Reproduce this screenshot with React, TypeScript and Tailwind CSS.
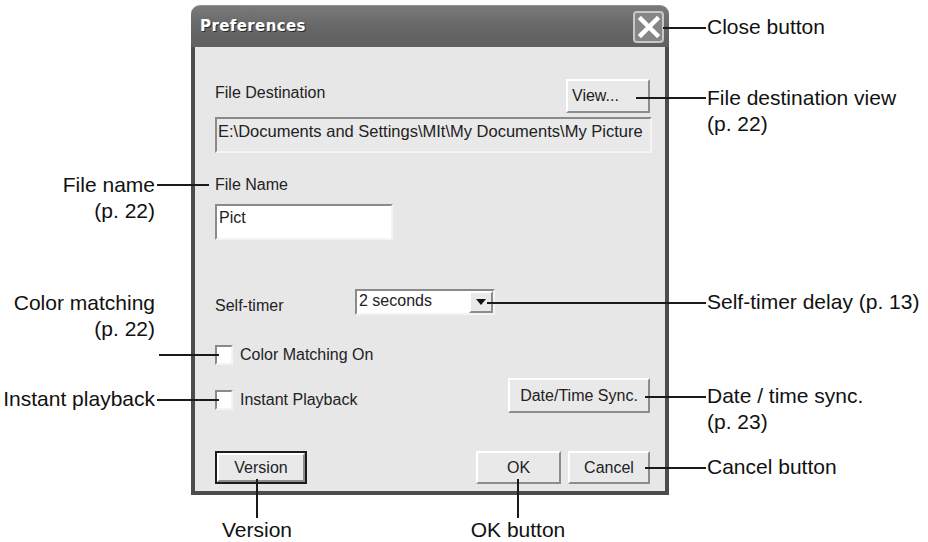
import React from "react";

const raised =
  "border-2 border-t-white border-l-white border-r-[#8c8c8c] border-b-[#8c8c8c] bg-[#e9e9e9]";
const sunken =
  "border-2 border-t-[#8a8a8a] border-l-[#8a8a8a] border-r-[#f4f4f4] border-b-[#f4f4f4]";

function HLine({ x1, x2, y }: { x1: number; x2: number; y: number }) {
  return (
    <div
      className="absolute h-[2px] bg-[#1a1a1a]"
      style={{ left: x1, top: y - 1, width: x2 - x1 }}
    />
  );
}
function VLine({ x, y1, y2 }: { x: number; y1: number; y2: number }) {
  return (
    <div
      className="absolute w-[2px] bg-[#1a1a1a]"
      style={{ left: x - 1, top: y1, height: y2 - y1 }}
    />
  );
}

function Checkbox() {
  return <div className={`w-[18px] h-[20px] bg-white ${sunken}`} />;
}

export default function App() {
  return (
    <div
      className="relative w-[928px] h-[542px] bg-white overflow-hidden"
      style={{ fontFamily: '"Liberation Sans", Arial, sans-serif' }}
    >
      {/* Dialog */}
      <div className="ml-[191px] pt-[5px] w-[478px] flex flex-col">
        {/* Title bar */}
        <div className="h-[42px] rounded-t-[9px] bg-gradient-to-b from-[#7a7a7a] via-[#676767] to-[#606060] border-t border-[#8f8f8f] flex items-center justify-between pl-[9px] pr-[5px]">
          <span
            className="text-white text-[15px] font-bold tracking-[0.4px] [text-shadow:1px_1px_0_#2a2a2a]"
            style={{ fontFamily: '"DejaVu Sans", sans-serif' }}
          >
            Preferences
          </span>
          <div className="w-[31px] h-[32px] rounded-[4px] border-2 border-[#c8c8c8] bg-[#868686] flex items-center justify-center">
            <svg width="22" height="22" viewBox="0 0 22 22">
              <path
                d="M3 3 L19 19 M19 3 L3 19"
                stroke="white"
                strokeWidth="4.5"
                strokeLinecap="square"
              />
            </svg>
          </div>
        </div>
        {/* Body */}
        <div className="bg-[#e7e7e7] border-x-4 border-b-4 border-[#4c4c4c] pl-[20px] pr-[15px] pb-[7px] text-[16px] text-[#222]">
          <div className="mt-[32px] flex justify-between items-start h-[34px]">
            <span className="mt-[4px] leading-[20px]">File Destination</span>
            <div className={`w-[84px] h-[34px] ${raised} flex items-center pl-[4px] leading-none`}>
              View...
            </div>
          </div>
          <div
            className={`mt-[4px] w-[437px] h-[36px] ${sunken} bg-[#e9e9e9] pl-[1px] pt-[2px] text-[16.5px] leading-[20px] whitespace-nowrap overflow-hidden`}
          >
            E:\Documents and Settings\MIt\My Documents\My Picture
          </div>
          <div className="mt-[22px] leading-[20px]">File Name</div>
          <div className={`mt-[9px] w-[178px] h-[36px] bg-white ${sunken} pl-[2px] pt-[2px] leading-[20px]`}>
            Pict
          </div>
          <div className="mt-[49px] flex items-center h-[26px]">
            <span className="w-[140px] pt-[8px] leading-[20px]">Self-timer</span>
            <div className={`w-[140px] h-[26px] bg-white ${sunken} flex items-stretch`}>
              <span className="flex-1 pl-[2px] leading-[20px]">2 seconds</span>
              <div className={`w-[24px] ${raised} flex items-center justify-center`}>
                <svg width="10" height="6" viewBox="0 0 10 6">
                  <path d="M0 0 H10 L5 6 Z" fill="#111" />
                </svg>
              </div>
            </div>
          </div>
          <div className="mt-[30px] flex items-center h-[20px]">
            <Checkbox />
            <span className="ml-[7px] leading-[20px]">Color Matching On</span>
          </div>
          <div className="mt-[13px] flex justify-between items-start h-[35px]">
            <div className="mt-[12px] flex items-center h-[20px]">
              <Checkbox />
              <span className="ml-[7px] leading-[20px]">Instant Playback</span>
            </div>
            <div className={`w-[142px] h-[35px] ${raised} flex items-center justify-center leading-none`}>
              Date/Time Sync.
            </div>
          </div>
          <div className="mt-[38px] flex justify-between items-start h-[33px]">
            <div className="w-[92px] h-[33px] border-2 border-[#1c1c1c]">
              <div className={`w-full h-full ${raised} flex items-center justify-center leading-none`}>
                Version
              </div>
            </div>
            <div className="flex gap-[7px]">
              <div className={`w-[85px] h-[33px] ${raised} flex items-center justify-center leading-none`}>
                OK
              </div>
              <div className={`w-[82px] h-[33px] ${raised} flex items-center justify-center leading-none`}>
                Cancel
              </div>
            </div>
          </div>
        </div>
      </div>

      {/* Callout lines */}
      <HLine x1={663} x2={706} y={28} />
      <HLine x1={636} x2={706} y={98} />
      <HLine x1={157} x2={209} y={185} />
      <HLine x1={487} x2={706} y={303} />
      <HLine x1={159} x2={219} y={355} />
      <HLine x1={157} x2={219} y={400} />
      <HLine x1={645} x2={706} y={397} />
      <HLine x1={645} x2={706} y={468} />
      <VLine x={257} y1={479} y2={518} />
      <VLine x={518} y1={479} y2={518} />

      {/* Callout texts */}
      <div className="absolute inset-0 text-[21px] leading-[26px] text-[#111]">
        <div className="absolute left-[707px] top-[14px] whitespace-nowrap">Close button</div>
        <div className="absolute left-[707px] top-[85px] whitespace-nowrap">
          File destination view
          <br />
          (p. 22)
        </div>
        <div className="absolute right-[773px] top-[172px] whitespace-nowrap text-right">
          File name
          <br />
          (p. 22)
        </div>
        <div className="absolute right-[773px] top-[290px] whitespace-nowrap text-right">
          Color matching
          <br />
          (p. 22)
        </div>
        <div className="absolute right-[773px] top-[386px] whitespace-nowrap text-right">
          Instant playback
        </div>
        <div className="absolute left-[707px] top-[289px] whitespace-nowrap">Self-timer delay (p. 13)</div>
        <div className="absolute left-[707px] top-[383px] whitespace-nowrap">
          Date / time sync.
          <br />
          (p. 23)
        </div>
        <div className="absolute left-[707px] top-[454px] whitespace-nowrap">Cancel button</div>
        <div className="absolute left-[202px] w-[110px] top-[517px] text-center whitespace-nowrap">Version</div>
        <div className="absolute left-[458px] w-[120px] top-[517px] text-center whitespace-nowrap">OK button</div>
      </div>
    </div>
  );
}
